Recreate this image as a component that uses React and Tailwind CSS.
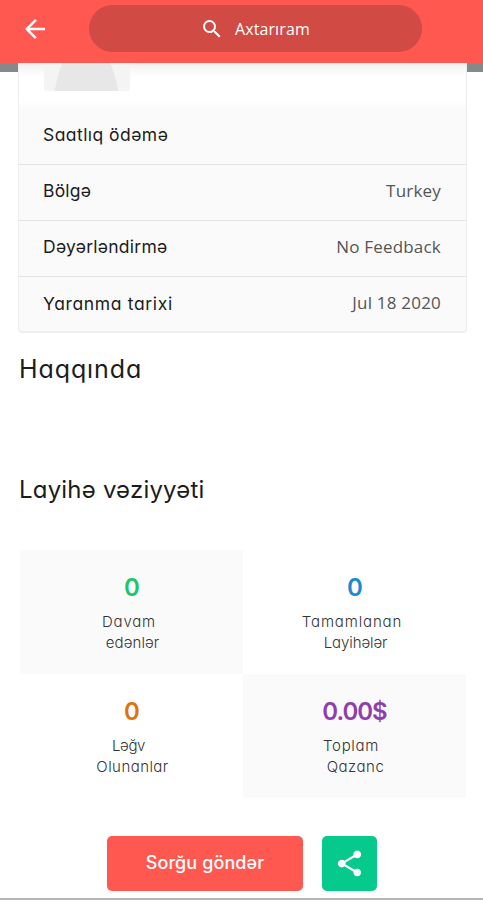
import { MdArrowBack, MdSearch, MdShare } from 'react-icons/md';

const details = [
  { label: 'Saatlıq ödəmə', value: '', labelClass: 'tracking-[0.45px]' },
  { label: 'Bölgə', value: 'Turkey', labelClass: 'tracking-[0.2px]' },
  { label: 'Dəyərləndirmə', value: 'No Feedback', labelClass: 'tracking-[0.25px]' },
  { label: 'Yaranma tarixi', value: 'Jul 18 2020', labelClass: 'tracking-[0.65px]' },
];

const stats = [
  {
    value: '0',
    color: 'text-[#1fc56b]',
    bg: 'bg-[#fafafa]',
    lines: [
      { text: 'Davam', className: 'pr-[5px] tracking-[0.8px]' },
      { text: 'edənlər', className: 'pl-[2px] tracking-[0.1px]' },
    ],
  },
  {
    value: '0',
    color: 'text-[#1c89d1]',
    bg: 'bg-white',
    lines: [
      { text: 'Tamamlanan', className: 'pr-[5px] tracking-[0.85px]' },
      { text: 'Layihələr', className: 'pl-[2px] tracking-[-0.1px]' },
    ],
  },
  {
    value: '0',
    color: 'text-[#e0730f]',
    bg: 'bg-white',
    lines: [
      { text: 'Ləğv', className: 'pr-[6px] tracking-[-0.4px]' },
      { text: 'Olunanlar', className: 'pl-[2px] tracking-[0.45px]' },
    ],
  },
  {
    value: '0.00$',
    color: 'text-[#8e3fab]',
    bg: 'bg-[#fafafa]',
    lines: [
      { text: 'Toplam', className: 'pr-[7px] tracking-[0.65px]' },
      { text: 'Qazanc', className: 'pl-[2px] tracking-[0.5px]' },
    ],
  },
];

function Header() {
  return (
    <header className="flex h-[63px] shrink-0 bg-[#ff5851] pt-[5px] pl-[20px] text-white">
      <MdArrowBack className="mt-[9px] h-[30px] w-[30px]" />
      <div className="ml-[39px] flex h-[47px] w-[333px] items-center rounded-full bg-[#d14a43] pl-[111px] font-['Open_Sans',sans-serif] text-[16px] font-medium">
        <MdSearch className="h-[24px] w-[24px]" />
        <span className="ml-[11px] tracking-[0.1px]">Axtarıram</span>
      </div>
    </header>
  );
}

function Avatar() {
  return (
    <svg width="86" height="28" viewBox="0 0 86 28" className="ml-[25px]">
      <path d="M0 0h86v25a3 3 0 0 1-3 3H3a3 3 0 0 1-3-3z" fill="#f4f4f4" />
      <path d="M18 0H66.500Q71.500 13 74.500 28H10.500Q13.500 13 18 0z" fill="#e7e7e7" />
    </svg>
  );
}

function ProfileCard() {
  return (
    <div className="bg-[linear-gradient(#868989_9px,white_9px)] pr-[16px] pl-[18px]">
      <div className="h-[270px] rounded-b-[4px] border-x border-b-2 border-[#eeeeee] bg-[#fafafa]">
        <div className="h-[46px] bg-[linear-gradient(#f0f1f2,white_14px,white_38px,#fafafa)]">
          <Avatar />
        </div>
        {details.map((row) => (
          <div
            key={row.label}
            className="flex h-[56px] items-center justify-between border-b border-[#e2e2e2] pr-[25px] pb-[2px] pl-[24px] text-[17px] last:border-b-0"
          >
            <span className={`text-[17.5px] text-[#1c1c1c] ${row.labelClass}`}>{row.label}</span>
            <span className="pb-[2px] font-['Open_Sans',sans-serif] tracking-[0.2px] text-[#555555]">{row.value}</span>
          </div>
        ))}
      </div>
    </div>
  );
}

function StatCell({ stat }) {
  return (
    <div className={`flex flex-col items-center pt-[22px] ${stat.bg}`}>
      <div
        className={`h-[39px] text-[24px] leading-[32px] font-semibold tracking-[-1px] ${stat.color}`}
      >
        {stat.value}
      </div>
      {stat.lines.map((line) => (
        <div key={line.text} className={`text-[15px] leading-[21px] font-light text-[#333333] ${line.className}`}>
          {line.text}
        </div>
      ))}
    </div>
  );
}

export default function App() {
  return (
    <div className="flex h-[900px] w-[483px] flex-col overflow-hidden border-b-2 border-[#b5b5b5] bg-white font-['Inter',sans-serif] [font-feature-settings:'cv11']">
      <Header />
      <ProfileCard />

      <h2 className="mt-[18px] h-[36px] pl-[19px] text-[25px] leading-[36px] tracking-[0.9px] text-[#1c1c1c]">
        Haqqında
      </h2>
      <h2 className="mt-[85px] h-[36px] pl-[19px] text-[24px] leading-[36px] tracking-[0.2px] text-[#1c1c1c]">
        Layihə vəziyyəti
      </h2>

      <div className="mt-[42px] ml-[20px] grid w-[446px] grid-cols-2 grid-rows-[124px_124px]">
        {stats.map((stat, i) => (
          <StatCell key={i} stat={stat} />
        ))}
      </div>

      {/* Actions */}
      <div className="mt-[38px] flex gap-[19px] pl-[107px] text-white">
        <button className="h-[55px] w-[196px] rounded-[5px] bg-[#ff5851] pb-[2px] text-[18px] font-medium tracking-[0.1px]">
          Sorğu göndər
        </button>
        <button className="grid h-[55px] w-[55px] place-items-center rounded-[5px] bg-[#05ca8b]">
          <MdShare className="h-[31px] w-[31px]" />
        </button>
      </div>
    </div>
  );
}
